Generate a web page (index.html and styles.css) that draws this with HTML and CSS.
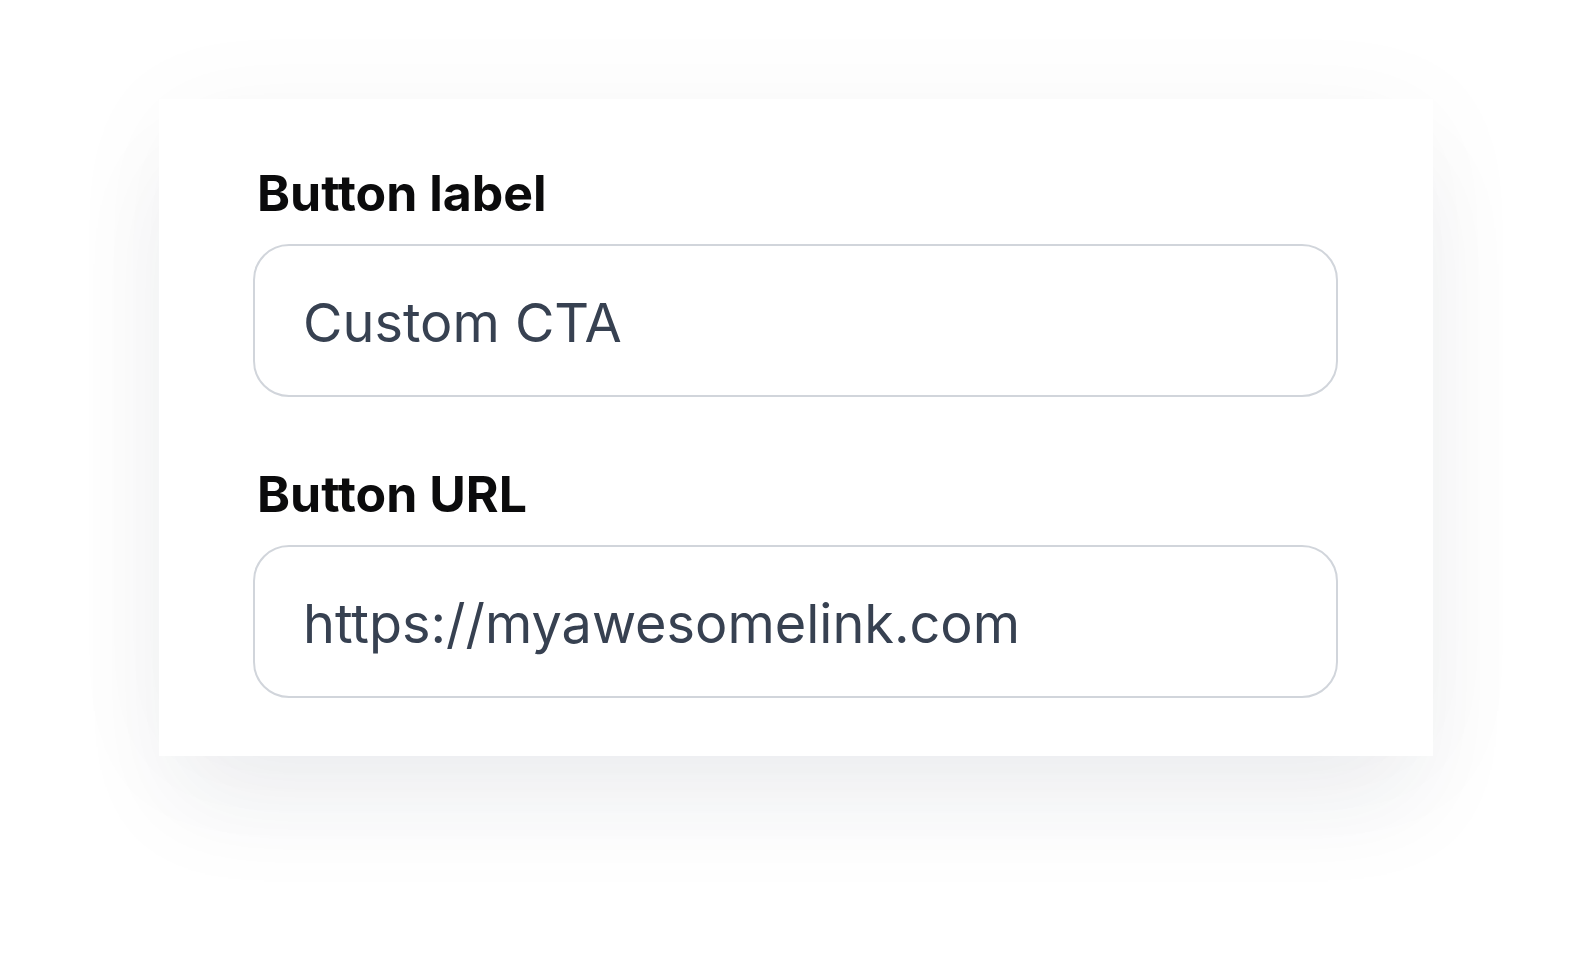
FILE: index.html
```html
<!DOCTYPE html>
<html lang="en">
<head>
    <meta charset="UTF-8">
    <meta name="viewport" content="width=device-width, initial-scale=1.0">
    <title>Button settings</title>
    <link rel="stylesheet" href="styles.css">
</head>
<body>
    <div class="page">
        <form class="card">
            <div class="field">
                <label class="field-label" for="buttonLabel">Button label</label>
                <input class="field-input" id="buttonLabel" type="text" value="Custom CTA">
            </div>
            <div class="field">
                <label class="field-label" for="buttonUrl">Button URL</label>
                <input class="field-input" id="buttonUrl" type="text" value="https://myawesomelink.com">
            </div>
        </form>
    </div>
</body>
</html>
```

FILE: styles.css
```css
* {
    margin: 0;
    padding: 0;
    box-sizing: border-box;
}

body {
    min-height: 100vh;
    background-color: #ffffff;
    font-family: Inter, 'Noto Sans', sans-serif;
    color: #111827;
}

.page {
    display: flex;
    justify-content: flex-start;
    padding: 99px 0 0 159px;
}

.card {
    display: flex;
    flex-direction: column;
    gap: 67px;
    width: 1274px;
    padding: 64px 95px 58px 94px;
    background: #ffffff;
    box-shadow: 0 60px 100px -15px rgba(30, 41, 70, 0.065),
                0 10px 110px rgba(30, 41, 70, 0.035);
}

.field {
    display: flex;
    flex-direction: column;
    gap: 21px;
}

.field-label {
    padding-left: 4px;
    font-size: 50px;
    line-height: 60px;
    font-weight: 700;
    color: #0b0b0c;
}

.field-input {
    width: 100%;
    height: 153px;
    padding: 4px 48px 0;
    border: 2px solid #d1d5db;
    border-radius: 36px;
    background: #ffffff;
    font-family: inherit;
    font-size: 54px;
    color: #374151;
    outline: none;
}
```
